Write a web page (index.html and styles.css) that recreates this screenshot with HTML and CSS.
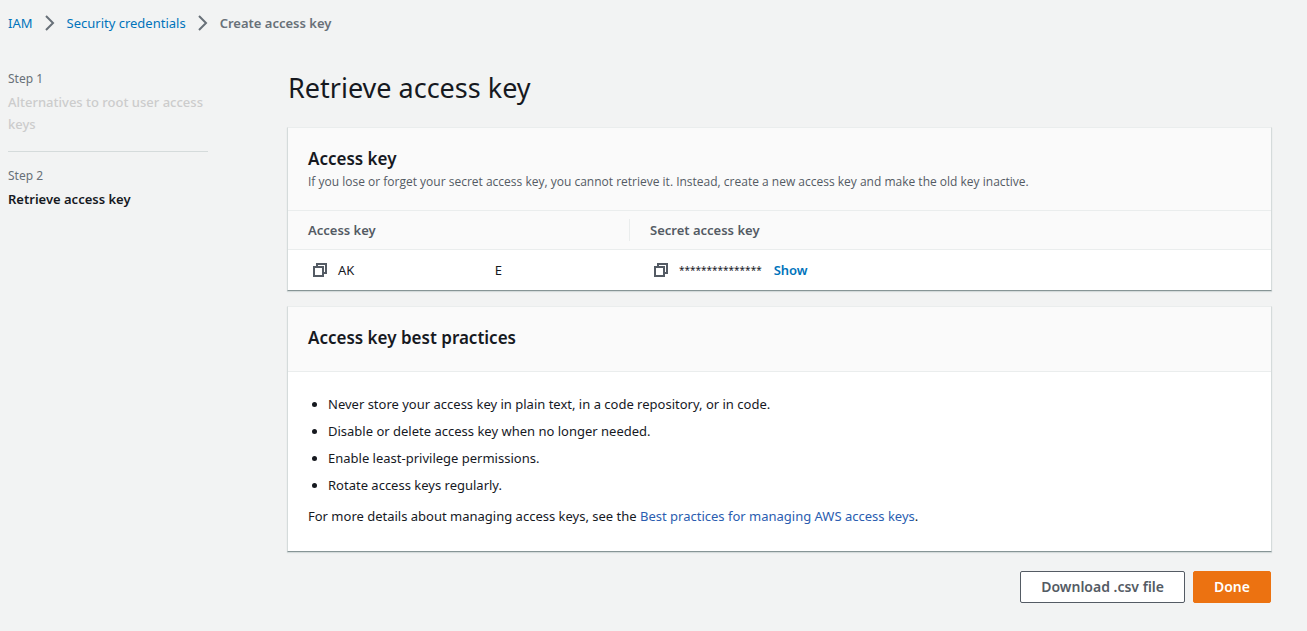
FILE: index.html
```html
<!DOCTYPE html>
<html lang="en">
<head>
<meta charset="utf-8">
<title>Create access key</title>
<link rel="stylesheet" href="styles.css">
</head>
<body>
<nav class="breadcrumbs" aria-label="Breadcrumbs">
  <a href="#">IAM</a>
  <svg class="chevron" viewBox="0 0 16 16" aria-hidden="true"><path d="M4 1l7 7-7 7"/></svg>
  <a href="#">Security credentials</a>
  <svg class="chevron" viewBox="0 0 16 16" aria-hidden="true"><path d="M4 1l7 7-7 7"/></svg>
  <span class="current" aria-current="page">Create access key</span>
</nav>
<div class="layout">
  <aside class="steps">
    <div class="step">
      <span class="step-label">Step 1</span>
      <span class="step-name disabled">Alternatives to root user access keys</span>
    </div>
    <div class="step">
      <span class="step-label">Step 2</span>
      <span class="step-name active">Retrieve access key</span>
    </div>
  </aside>
  <main class="content">
    <h1 class="title">Retrieve access key</h1>
    <section class="card">
      <header class="card-header">
        <h2>Access key</h2>
        <p>If you lose or forget your secret access key, you cannot retrieve it. Instead, create a new access key and make the old key inactive.</p>
      </header>
      <table class="keys">
        <thead>
          <tr><th class="key-column" scope="col">Access key</th><th scope="col"><span class="divided">Secret access key</span></th></tr>
        </thead>
        <tbody>
          <tr>
            <td>
              <div class="cell">
                <button class="copy" type="button" aria-label="Copy access key"><svg viewBox="0 0 16 16" aria-hidden="true"><path d="M2 5h9v9H2zM5 5V2h9v9h-3"/></svg></button>
                <span class="key-id"><span>AK</span><span>E</span></span>
              </div>
            </td>
            <td>
              <div class="cell">
                <button class="copy" type="button" aria-label="Copy secret access key"><svg viewBox="0 0 16 16" aria-hidden="true"><path d="M2 5h9v9H2zM5 5V2h9v9h-3"/></svg></button>
                <span class="secret">***************</span>
                <button class="show" type="button">Show</button>
              </div>
            </td>
          </tr>
        </tbody>
      </table>
    </section>
    <section class="card">
      <header class="card-header practices-header"><h2>Access key best practices</h2></header>
      <div class="card-body">
        <ul class="practices">
          <li>Never store your access key in plain text, in a code repository, or in code.</li>
          <li>Disable or delete access key when no longer needed.</li>
          <li>Enable least-privilege permissions.</li>
          <li>Rotate access keys regularly.</li>
        </ul>
        <p class="details">For more details about managing access keys, see the <a href="#">Best practices for managing AWS access keys</a>.</p>
      </div>
    </section>
    <div class="actions">
      <button class="button" type="button">Download .csv file</button>
      <button class="button primary" type="button">Done</button>
    </div>
  </main>
</div>
</body>
</html>
```
FILE: styles.css
```css
* { box-sizing: border-box; }
body {
  margin: 0;
  padding: 12px 35px 28px 8px;
  background: #f2f3f3;
  color: #16191f;
  font: 13px/22px "Noto Sans", "Open Sans", sans-serif;
}
h1, h2, p, ul { margin: 0; }
a { color: #0073bb; text-decoration: none; }
button { font: inherit; cursor: pointer; }
.breadcrumbs { display: flex; align-items: center; gap: 9px; }
.chevron { width: 16px; height: 16px; fill: none; stroke: #687078; stroke-width: 2; }
.current { color: #687078; font-weight: 600; }
.layout { display: grid; grid-template-columns: 200px minmax(0, 1fr); gap: 79px; margin-top: 34px; }
.step { display: flex; flex-direction: column; }
.step + .step { margin-top: 16px; padding-top: 13px; border-top: 1px solid #d5dbdb; }
.step-label { color: #687078; font-size: 12px; }
.step-name { margin-top: 1px; font-weight: 600; }
.disabled { color: #ccc; font-weight: 500; }
.title { padding: 2px 0 0 1px; font-size: 27px; line-height: 36px; font-weight: 400; }
.card {
  background: #fff;
  border: 1px solid #d5dbdb;
  border-top-color: #eaeded;
  border-bottom-color: #879596;
  box-shadow: 0 1px 1px #d5dbdb;
}
.title + .card { margin-top: 21px; }
.card + .card { margin-top: 15px; }
.card-header { padding: 20px 20px 17px; background: #fafafa; border-bottom: 1px solid #eaeded; }
.card-header h2 { font-size: 17px; line-height: 22px; font-weight: 600; }
.card-header p { padding-top: 1px; color: #545b64; font-family: "Open Sans", sans-serif; font-size: 12px; line-height: 22px; }
.practices-header { padding-bottom: 22px; }
.keys { width: 100%; border-spacing: 0; table-layout: fixed; text-align: left; }
.keys th { height: 39px; padding: 0 20px; background: #fafafa; border-bottom: 1px solid #eaeded; color: #545b64; font-weight: 600; }
.keys th + th { padding-left: 0; }
.key-column { width: 341px; }
.divided { display: block; padding-left: 20px; border-left: 1px solid #eaeded; }
.keys td { height: 40px; padding: 0 20px; }
.cell { display: flex; align-items: center; }
.copy { display: flex; padding: 0 4px; border: 0; background: none; }
.copy svg { width: 16px; height: 16px; fill: none; stroke: #545b64; stroke-width: 2; }
.key-id { display: flex; justify-content: space-between; width: 164px; margin-left: 6px; }
.secret { margin-left: 6px; font-size: 10px; }
.show { margin-left: 12px; padding: 0; border: 0; background: none; color: #0073bb; font-weight: 600; }
.card-body { padding: 21px 20px 24px; }
.practices { padding-left: 20px; }
.practices li { padding: 0 0 5px; }
.details { padding-top: 4px; }
.details a { color: #2a5db0; }
.actions { display: flex; justify-content: flex-end; gap: 8px; padding: 19px 1px 0; }
.button { height: 32px; padding: 0 20px; border: 1px solid #545b64; border-radius: 2px; background: #fff; color: #545b64; font-size: 14px; font-weight: 600; }
.primary { border-color: #ec7211; background: #ec7211; color: #fff; }
```
